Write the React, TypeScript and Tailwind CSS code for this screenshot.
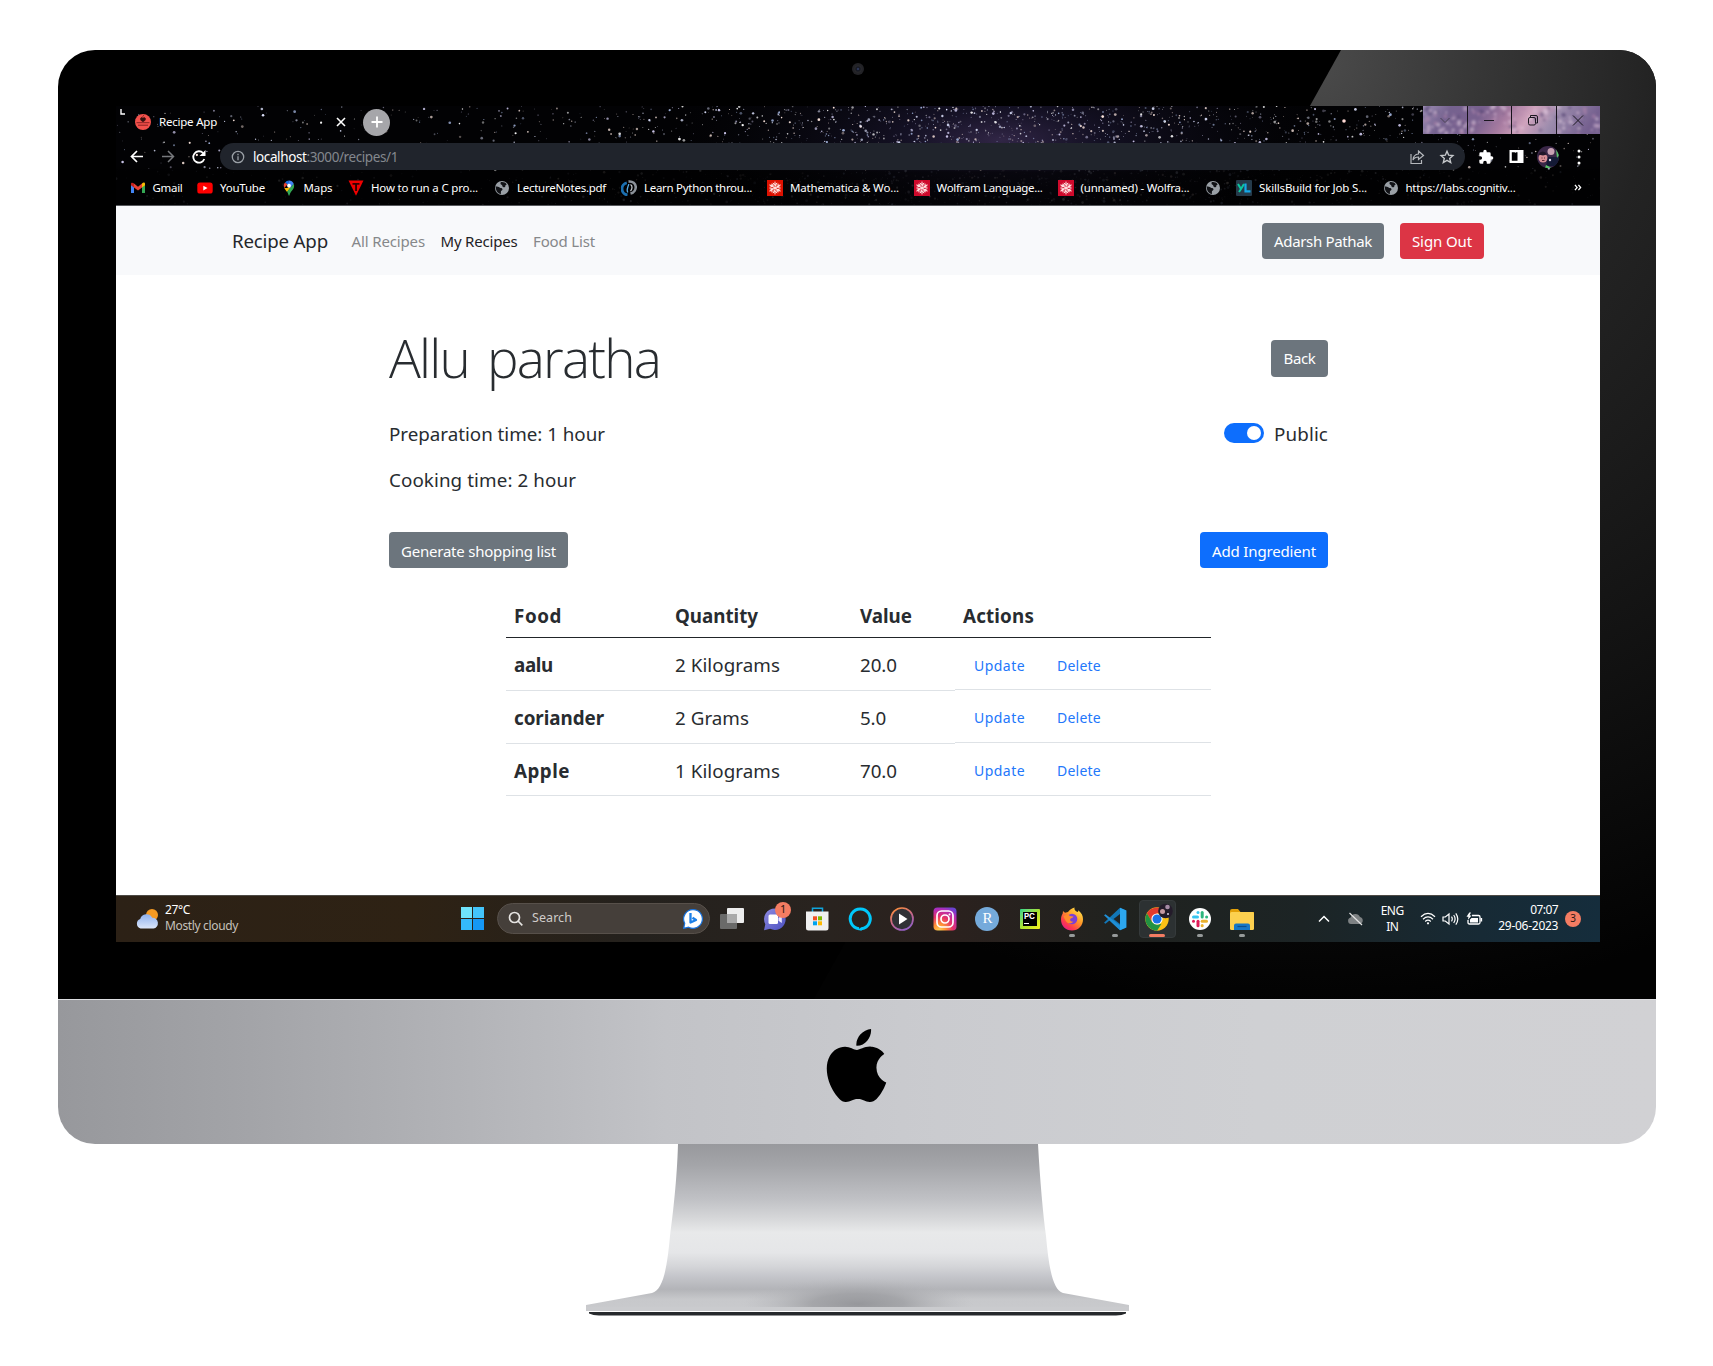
import React, { useLayoutEffect, useRef, useState } from "react";
import { SiApple } from "react-icons/si";

/* Text drawn at an exact width: spacing between letters is adjusted after measuring. */
function Fit({ w, className = "", children }: { w: number; className?: string; children: React.ReactNode }) {
  const ref = useRef<HTMLSpanElement>(null);
  const [spacing, setSpacing] = useState(0);
  useLayoutEffect(() => {
    const el = ref.current;
    if (!el) return;
    const n = (el.textContent || "").length;
    setSpacing((w - el.getBoundingClientRect().width) / n);
  }, [w]);
  return (
    <span ref={ref} className={"inline-block justify-self-start whitespace-nowrap " + className} style={{ letterSpacing: spacing }}>
      {children}
    </span>
  );
}

function makeRandom(seed: number) {
  let s = seed;
  return () => {
    s = (s * 1664525 + 1013904223) % 4294967296;
    return s / 4294967296;
  };
}

type Star = { x: number; y: number; r: number; o: number; c: string };

function makeStars(): Star[] {
  const rnd = makeRandom(77);
  const colors = ["#ffffff", "#dfe4ff", "#c9c4e8", "#ffe9e0", "#9fb0d8"];
  const out: Star[] = [];
  for (let i = 0; i < 7500; i++) {
    const x = rnd() * 1484;
    const y = rnd() * 100;
    const k = Math.exp(-Math.pow((x - 890) / 340, 2));
    const keep = 0.12 + k * 0.75;
    const pick = rnd();
    const size = rnd();
    const shade = rnd();
    const col = colors[Math.floor(rnd() * colors.length)];
    if (pick > keep) continue;
    const low = y > 64;
    out.push({ x, y, r: 0.45 + size * size * size * 0.95, o: (0.3 + shade * 0.7) * (low ? 0.3 : 1), c: col });
  }
  return out;
}
const STARS = makeStars();

function Sky() {
  return (
    <svg className="absolute inset-0" width="1484" height="100" viewBox="0 0 1484 100" aria-hidden="true">
      <defs>
        <radialGradient id="milky" cx="0.5" cy="0.5" r="0.5">
          <stop offset="0" stopColor="#453562" stopOpacity="0.7" />
          <stop offset="0.3" stopColor="#1f1a38" stopOpacity="0.6" />
          <stop offset="1" stopColor="#05060c" stopOpacity="0" />
        </radialGradient>
        <linearGradient id="dim" x1="0" x2="0" y1="0" y2="1">
          <stop offset="0" stopColor="#000" stopOpacity="0" />
          <stop offset="0.6" stopColor="#000" stopOpacity="0" />
          <stop offset="0.66" stopColor="#000" stopOpacity="0.6" />
          <stop offset="1" stopColor="#000" stopOpacity="0.6" />
        </linearGradient>
      </defs>
      <rect width="1484" height="100" fill="#020204" />
      <ellipse cx="885" cy="34" rx="330" ry="110" fill="url(#milky)" />
      {STARS.map((s, i) => (
        <circle key={i} cx={s.x} cy={s.y} r={s.r} fill={s.c} opacity={s.o} />
      ))}
      <circle cx="1228" cy="15" r="1.8" fill="#ffd9d4" />
      <path d="M5 3v5h4" stroke="#fff" strokeWidth="1.4" fill="none" />
      <rect width="1484" height="100" fill="url(#dim)" />
    </svg>
  );
}

const Globe = () => (
  <svg width="16" height="16" viewBox="0 0 16 16">
    <circle cx="8" cy="8" r="7" fill="#9aa0a6" />
    <path d="M1.800 6.500c1.500 0 2.800.1 3.800 1 .9.900 2.800.2 2.900 1.700.1 1.300-1.600 1.200-1.600 2.600v2.300C3.800 13.700 1.500 10.500 1.800 6.500zM6.800 2.200c2.500-.4 4.700.4 6 2.300-1 .2-1.400.8-1.500 1.700 0 1.200-1.400 1.500-2.300.8-.9-.6-.4-1.700-1.400-2.200-.9-.4-1.600-1.700-.8-2.600z" fill="#111216" />
  </svg>
);
const Gmail = () => (
  <svg width="16" height="16" viewBox="0 0 16 16">
    <path d="M1 3.6V13h3V7.2L1 4.4z" fill="#4285f4" />
    <path d="M12 7.2V13h3V4.2z" fill="#34a853" />
    <path d="M12 3.6v4L15 5.3V4c0-1.6-1.7-1.9-3-.4z" fill="#fbbc04" />
    <path d="M4 3.6 8 6.7l4-3.1v4L8 10.6 4 7.6z" fill="#ea4335" />
    <path d="M1 4v1.3l3 2.3v-4C2.700 2.400 1 2.500 1 4z" fill="#c5221f" />
  </svg>
);
const YouTube = () => (
  <svg width="16" height="16" viewBox="0 0 16 16">
    <rect x="0.3" y="2.600" width="15.400" height="11" rx="2.700" fill="#f00" />
    <path d="M6.300 5.700v4.800L10.500 8.100z" fill="#fff" />
  </svg>
);
const MapPin = () => (
  <svg width="16" height="16" viewBox="0 0 16 16">
    <path d="M8 .5a5.300 5.300 0 0 0-4 1.900l3 2.600z" fill="#1a73e8" />
    <path d="M4 2.400A5.300 5.300 0 0 0 3.300 8l3.100-3.500z" fill="#ea4335" />
    <path d="M3.300 8c.7 1.400 1.700 2.400 2.700 3.900l5.900-7.500-2 1.300L6.400 8z" fill="#fbbc04" />
    <path d="M12.700 3.800c1 2.600.3 4.300-1.400 6.400C9.700 12.300 9 13 8.500 15.500H7.600C7.300 13.800 6.800 12.900 6 11.700z" fill="#34a853" />
    <path d="M8 .5c2.100 0 3.900 1.200 4.700 3.300L9.300 7.700 6.800 4z" fill="#4285f4" />
    <circle cx="8" cy="5.700" r="1.900" fill="#fff" />
  </svg>
);
const Triangle = () => (
  <svg width="16" height="16" viewBox="0 0 16 16">
    <path d="M.5.5h15L8 15.700z" fill="#f00000" />
    <path d="M4.500 3h7v1.800H9V11H7.100V4.800H4.500z" fill="#300" />
  </svg>
);
const Python = () => (
  <svg width="16" height="16" viewBox="0 0 16 16" fill="none">
    <path d="M6.500 15A6.200 6.200 0 0 1 5.800 2.800" stroke="#1b6fb0" strokeWidth="2.800" />
    <path d="M6.800 12.500c-2-3 .5-5.500 1-8.500" stroke="#5aa7dc" strokeWidth="1.300" />
    <path d="M7.500 1.600c9-1 9.500 10 2 12" stroke="#8b9199" strokeWidth="2.600" />
    <path d="M9.500 4.500c2.500 1.500 1.500 5 0 6.500" stroke="#c3c7cc" strokeWidth="1.300" />
  </svg>
);
const WolframMark = ({ color }: { color: string }) => (
  <svg width="16" height="16" viewBox="0 0 16 16">
    <rect width="16" height="16" fill={color} />
    <g stroke="#ffe4e2" strokeWidth="1" fill="none">
      {[0, 60, 120, 180, 240, 300].map((a) => (
        <path key={a} d="M8 8V1.600M8 4.700 5.800 3M8 4.700 10.200 3M8 6 L10.300 4.300" transform={`rotate(${a} 8 8)`} />
      ))}
    </g>
  </svg>
);
const SkillsIcon = () => (
  <svg width="16" height="16" viewBox="0 0 16 16">
    <rect width="16" height="16" rx="1" fill="#253a4a" />
    <path d="M2 4l3 5-2 3M8 4 5 9" stroke="#0cc6a0" strokeWidth="2" fill="none" />
    <path d="M9.500 3.500v7.800h5" stroke="#16a9e8" strokeWidth="2.200" fill="none" />
  </svg>
);

const bookmarks: { icon: React.ReactNode; text?: string; tw: number; cell: string }[] = [
  { icon: <Gmail />, text: "Gmail", tw: 30, cell: "w-[67.5px]" },
  { icon: <YouTube />, text: "YouTube", tw: 45, cell: "w-[83.5px]" },
  { icon: <MapPin />, text: "Maps", tw: 29, cell: "w-[67.5px]" },
  { icon: <Triangle />, text: "How to run a C pro...", tw: 107, cell: "w-[146px]" },
  { icon: <Globe />, text: "LectureNotes.pdf", tw: 89, cell: "w-[127px]" },
  { icon: <Python />, text: "Learn Python throu...", tw: 108, cell: "w-[146px]" },
  { icon: <WolframMark color="#dd1100" />, text: "Mathematica & Wo...", tw: 109, cell: "w-[146.5px]" },
  { icon: <WolframMark color="#cf0a2c" />, text: "Wolfram Language...", tw: 106, cell: "w-[144px]" },
  { icon: <WolframMark color="#cf0a2c" />, text: "(unnamed) - Wolfra...", tw: 109, cell: "w-[147.5px]" },
  { icon: <Globe />, tw: 0, cell: "w-[31px]" },
  { icon: <SkillsIcon />, text: "SkillsBuild for Job S...", tw: 108, cell: "w-[146.500px]" },
  { icon: <Globe />, text: "https://labs.cognitiv...", tw: 110, cell: "w-[190px]" },
];

function WindowButtons() {
  const dots = makeRandom(9);
  return (
    <div className="relative ml-auto flex h-[28px] w-[177px] overflow-hidden bg-[#8a74a0]">
      <svg className="absolute inset-0" width="177" height="28" viewBox="0 0 177 28">
        <defs>
          <linearGradient id="neb" x1="0" x2="1" y1="0" y2="0.1">
            <stop offset="0" stopColor="#9d8fb4" />
            <stop offset="0.16" stopColor="#75628f" />
            <stop offset="0.35" stopColor="#79618f" />
            <stop offset="0.5" stopColor="#a67ba0" />
            <stop offset="0.63" stopColor="#d0a3bd" />
            <stop offset="0.78" stopColor="#9c8cad" />
            <stop offset="1" stopColor="#75608f" />
          </linearGradient>
          <filter id="soft"><feGaussianBlur stdDeviation="0.9" /></filter>
        </defs>
        <rect width="177" height="28" fill="url(#neb)" />
        <g filter="url(#soft)">
          {Array.from({ length: 150 }, (_, i) => (
            <circle key={i} cx={dots() * 177} cy={dots() * 28} r={0.8 + dots() * 1.800} fill={["#d9bcd6", "#5c4a78", "#b98ab0", "#e6d3e4"][i % 4]} opacity="0.45" />
          ))}
        </g>
        <path d="M44.500 0v28M88.500 0v28M133.500 0v28" stroke="#17121c" strokeWidth="1" />
        <g fill="none" stroke="#1b1720" strokeWidth="1">
          <path d="M17.500 12l4.500 4.500 4.500-4.500" stroke="#4a4254" />
          <path d="M61 14.500h10" />
          <rect x="105.500" y="11.500" width="7" height="7.500" rx="1.500" />
          <path d="M107.500 11v-1.500h5.500q1.500 0 1.500 1.500v6h-1.500" />
          <path d="M150 9.500l10 10M160 9.500l-10 10" />
        </g>
      </svg>
    </div>
  );
}

function BrowserChrome() {
  return (
    <div className="relative h-[100px] w-full overflow-hidden bg-black text-white">
      <Sky />
      <div className="relative flex h-full flex-col">
        <div className="flex h-[37px] items-start">
          <div className="flex h-[32px] items-center pl-[19px]">
            <svg width="16" height="16" viewBox="0 0 16 16">
              <circle cx="8" cy="8" r="8" fill="#f2504b" />
              <path d="M1.500 8.700h13M3 11.200h10" stroke="#7c1d1c" strokeWidth="0.900" />
              <path d="M8 7.700C5.800 7 5 5.200 5.800 4c.8-.9 1.800-.4 2.200.3.400-.9 1.500-1.200 2.200-.3C11 5.200 10.200 7 8 7.700zM7.500 2.500 9 1.300" fill="#34100f" stroke="#34100f" strokeWidth="0.600" />
            </svg>
            <Fit w={58} className="ml-2 text-[11.5px]">Recipe App</Fit>
            <svg className="ml-[119px]" width="10" height="10" viewBox="0 0 10 10"><path d="M1 1l8 8M9 1L1 9" stroke="#fff" strokeWidth="1.600" /></svg>
            <div className="ml-[17px] flex h-[27px] w-[27px] items-center justify-center rounded-full bg-[#a6a6aa]">
              <svg width="12" height="12" viewBox="0 0 12 12"><path d="M6 .5v11M.5 6h11" stroke="#fff" strokeWidth="1.800" /></svg>
            </div>
          </div>
          <WindowButtons />
        </div>
        <div className="flex h-[27px] items-center pl-[13px]">
          <svg width="16" height="16" viewBox="0 0 16 16" fill="none" stroke="#fff" strokeWidth="1.700"><path d="M14 7.500H3M8 2 2.500 7.500 8 13" /></svg>
          <svg className="ml-[15px]" width="16" height="16" viewBox="0 0 16 16" fill="none" stroke="#77797d" strokeWidth="1.500"><path d="M2 7.500h11M8 2l5.500 5.500L8 13" /></svg>
          <svg className="ml-[15px]" width="16" height="16" viewBox="0 0 16 16" fill="none" stroke="#fff" strokeWidth="1.800"><path d="M13.300 10a5.700 5.700 0 1 1-1.200-6" /><path d="M14.500 1v6H8.500z" fill="#fff" stroke="none" /></svg>
          <div className="ml-[13px] flex h-[27px] w-[1244.500px] items-center rounded-full bg-[#20242c] pl-[11px] pr-[10px]">
            <svg width="14" height="14" viewBox="0 0 14 14" fill="none" stroke="#9aa0a6" strokeWidth="1.300"><circle cx="7" cy="7" r="5.700" /><path d="M7 6.300v3.900M7 3.800v1.400" /></svg>
            <Fit w={145} className="ml-2 pt-px text-[13.500px] text-[#84888e]"><span className="text-white">localhost</span>:3000/recipes/1</Fit>
            <svg className="ml-auto" width="16" height="16" viewBox="0 0 16 16" fill="none" stroke="#b4b7bb" strokeWidth="1.200"><path d="M2 5v9.500h10.500v-3.500M9.500 2 14.500 6.500l-5 4V8C7 8 5 9 4 11c.2-3 2-5.700 5.500-6z" /></svg>
            <svg className="ml-[14px]" width="16" height="16" viewBox="0 0 16 16" fill="none" stroke="#c4c7ca" strokeWidth="1.400"><path d="M8 2.300l1.700 3.900 4.200.4-3.200 2.800 1 4.200L8 11.400l-3.700 2.200 1-4.200L2.100 6.600l4.200-.4z" /></svg>
          </div>
          <svg className="ml-[13px]" width="16" height="16" viewBox="0 0 24 24" fill="#fff"><path d="M20.500 11H19V7a2 2 0 0 0-2-2h-4V3.500a2.500 2.500 0 0 0-5 0V5H4a2 2 0 0 0-2 2v3.800h1.500a2.700 2.700 0 0 1 0 5.400H2V20a2 2 0 0 0 2 2h3.800v-1.500a2.700 2.700 0 0 1 5.400 0V22H17a2 2 0 0 0 2-2v-4h1.500a2.500 2.500 0 0 0 0-5z" /></svg>
          <svg className="ml-[15px]" width="15" height="15" viewBox="0 0 15 15"><path d="M.5 1h14v13H.5zM2.800 3.200v8.600h5.700V3.200z" fill="#fff" fillRule="evenodd" /></svg>
          <svg className="ml-[13px]" width="22" height="22" viewBox="0 0 22 22">
            <clipPath id="av"><circle cx="11" cy="11" r="11" /></clipPath>
            <g clipPath="url(#av)">
              <rect width="22" height="22" fill="#3a2748" />
              <circle cx="6" cy="12" r="4.500" fill="#d78f96" /><circle cx="14" cy="5.500" r="3.500" fill="#c8a2b4" />
              <path d="M1 8.500q5-6 9 0l-4 1z" fill="#201629" /><path d="M11 11h11v9H9z" fill="#141a36" />
              <path d="M19 3l3 6-2 3zM9 19l6 3H8z" fill="#58c56a" /><circle cx="13" cy="14" r="1.200" fill="#d6cde2" />
              <path d="M4.500 12h1M7 12h1M5 14.500h2.500" stroke="#5b2838" />
            </g>
          </svg>
          <svg className="ml-[18px]" width="4" height="16" viewBox="0 0 4 16" fill="#fff"><circle cx="2" cy="2" r="1.500" /><circle cx="2" cy="8" r="1.500" /><circle cx="2" cy="14" r="1.500" /></svg>
        </div>
        <div className="flex h-[35px] items-center pl-[13.500px]">
          {bookmarks.map((b, i) => (
            <div key={i} className={"flex shrink-0 items-center " + b.cell}>
              {b.icon}
              {b.text && <Fit w={b.tw} className="ml-[7px] text-[11.500px]">{b.text}</Fit>}
            </div>
          ))}
          <svg width="10" height="7" viewBox="0 0 11 8" fill="none" stroke="#fff" strokeWidth="1.500"><path d="M2 1l2.500 3L2 7M6 1l2.500 3L6 7" /></svg>
        </div>
        <div className="h-px bg-[#56585c]" />
      </div>
    </div>
  );
}

function SiteNav() {
  return (
    <nav className="flex h-[69px] items-center bg-[#f8f9fb] pl-[116px] pr-[116px] text-[15px] text-[#86888a]">
      <Fit w={96} className="pt-[2px] text-[18.700px] text-[#24272b]">Recipe App</Fit>
      <Fit w={73.5} className="ml-[23.500px] pt-[2px]">All Recipes</Fit>
      <Fit w={77} className="ml-[15.500px] pt-[2px] text-[#1f2226]">My Recipes</Fit>
      <Fit w={62} className="ml-[15.500px] pt-[2px]">Food List</Fit>
      <button className="ml-auto flex h-[36px] w-[122px] items-center justify-center rounded-[4px] bg-[#6c757d] pt-px text-white"><Fit w={98}>Adarsh Pathak</Fit></button>
      <button className="ml-[16px] flex h-[36px] w-[84px] items-center justify-center rounded-[4px] bg-[#dc3545] pt-px text-white"><Fit w={60}>Sign Out</Fit></button>
    </nav>
  );
}

const rows = [
  { food: "aalu", fw: 39, qty: "2 Kilograms", qw: 105, value: "20.0", vw: 37 },
  { food: "coriander", fw: 90, qty: "2 Grams", qw: 74, value: "5.0", vw: 26 },
  { food: "Apple", fw: 56, qty: "1 Kilograms", qw: 105, value: "70.0", vw: 37 },
];

function RecipePage() {
  return (
    <main className="flex h-[620px] shrink-0 flex-col bg-white pl-[273px] pr-[272px] pt-[65px] text-[18.800px] text-[#282c30]">
      <div className="flex h-[37px] items-center justify-between">
        <Fit w={271} className="relative -top-px font-['Open_Sans','Noto_Sans',sans-serif] text-[53px] font-light leading-[37px] [word-spacing:6px]">Allu paratha</Fit>
        <button className="flex h-[37px] w-[57px] items-center justify-center rounded-[4px] bg-[#6c757d] text-[15px] text-white"><Fit w={32}>Back</Fit></button>
      </div>
      <div className="mt-[42px] flex h-[30px] items-center justify-between">
        <Fit w={216}>Preparation time: 1 hour</Fit>
        <div className="flex items-center gap-[10px]">
          <div className="relative -top-px flex h-[20px] w-[40px] items-center justify-end rounded-full bg-[#0d6efd] pr-[3px]"><div className="h-[14px] w-[14px] rounded-full bg-white" /></div>
          <Fit w={54}>Public</Fit>
        </div>
      </div>
      <div className="mt-[16px] flex h-[30px] items-center"><Fit w={187}>Cooking time: 2 hour</Fit></div>
      <div className="mt-[37px] flex h-[36px] items-center justify-between text-[15px] text-white">
        <button className="flex h-[36px] w-[179px] items-center justify-center rounded-[4px] bg-[#6c757d] pt-[2px]"><Fit w={155}>Generate shopping list</Fit></button>
        <button className="flex h-[36px] w-[128px] items-center justify-center rounded-[4px] bg-[#0d6efd] pt-[2px]"><Fit w={104}>Add Ingredient</Fit></button>
      </div>
      <div className="ml-[117px] mt-[26px] w-[705px]">
        <div className="grid h-[44px] grid-cols-[161px_185px_103px_256px] items-center border-b border-[#212529] pl-2 pt-px font-bold">
          <Fit w={48}>Food</Fit><Fit w={83}>Quantity</Fit><Fit w={52}>Value</Fit><Fit w={71}>Actions</Fit>
        </div>
        {rows.map((r) => (
          <div key={r.food} className="flex h-[52.800px]">
            <div className="grid w-[449px] grid-cols-[161px_185px_103px] items-center border-b border-[#dee2e6] pl-2 pt-[3px]">
              <Fit w={r.fw} className="font-bold">{r.food}</Fit>
              <Fit w={r.qw}>{r.qty}</Fit>
              <Fit w={r.vw}>{r.value}</Fit>
            </div>
            <div className="flex h-[52px] w-[256px] items-center border-b border-[#dee2e6] pl-[19px] pt-[3px] text-[14px] text-[#2377fb]">
              <Fit w={51}>Update</Fit>
              <Fit w={44} className="ml-[32px]">Delete</Fit>
            </div>
          </div>
        ))}
      </div>
    </main>
  );
}

const S = ({ children }: { children: React.ReactNode }) => (
  <svg width="24" height="24" viewBox="0 0 24 24">{children}</svg>
);

const apps: { icon: React.ReactNode; open?: boolean; active?: boolean; badge?: string }[] = [
  {
    icon: (
      <S>
        <rect x="7" y="1" width="17" height="15" rx="1" fill="#ededed" />
        <rect x="0" y="7" width="17" height="15" rx="1" fill="#777" fillOpacity="0.850" />
        <path d="M7 7h10v9H7z" fill="#a9a9a9" />
      </S>
    ),
  },
  {
    badge: "1",
    icon: (
      <S>
        <defs><linearGradient id="chat" x1="0" x2="1" y1="0" y2="1"><stop offset="0" stopColor="#8f8ae0" /><stop offset="1" stopColor="#4a50c0" /></linearGradient></defs>
        <path d="M12 1.500a10.700 10.700 0 1 1-4.800 20.300L1 23.200l1.300-6A10.700 10.700 0 0 1 12 1.500z" fill="url(#chat)" />
        <rect x="5.500" y="7.500" width="9.500" height="9.500" rx="1.500" fill="#fff" /><path d="M15.500 11l3.300-2.300v7.200L15.500 13.700z" fill="#e9e6ff" />
      </S>
    ),
  },
  {
    icon: (
      <S>
        <path d="M7.500 5V1.200h10V5" stroke="#0fa5dd" strokeWidth="1.500" fill="none" />
        <path d="M1 4.500h22.500v16.500a2.500 2.500 0 0 1-2.500 2.500H3.500A2.500 2.500 0 0 1 1 21z" fill="#f0f0f0" />
        <path d="M8 9.300h4v4H8z" fill="#f25022" /><path d="M13 9.300h4v4h-4z" fill="#7fba00" /><path d="M8 14.300h4v4H8z" fill="#00a4ef" /><path d="M13 14.300h4v4h-4z" fill="#ffb900" />
      </S>
    ),
  },
  { icon: <S><path d="M11 21.800A10 10 0 1 1 13.500 21.800Q12 22.500 11.800 23.400" stroke="#00c8fb" strokeWidth="3" fill="none" /></S> },
  {
    icon: (
      <S>
        <defs><linearGradient id="mp" x1="0.200" x2="0.700" y1="0" y2="1"><stop offset="0" stopColor="#ff8f3d" /><stop offset="0.550" stopColor="#c0648f" /><stop offset="1" stopColor="#9260c8" /></linearGradient></defs>
        <circle cx="12" cy="12" r="11" fill="#303136" stroke="url(#mp)" strokeWidth="1.700" /><path d="M9 6.500l8.500 5.500L9 17.500z" fill="#fff" />
      </S>
    ),
  },
  {
    icon: (
      <S>
        <defs>
          <radialGradient id="ig" cx="0.250" cy="1" r="1.100"><stop offset="0" stopColor="#ffd255" /><stop offset="0.250" stopColor="#ff9336" /><stop offset="0.550" stopColor="#e5306b" /><stop offset="0.850" stopColor="#b02cba" /><stop offset="1" stopColor="#6a43d0" /></radialGradient>
        </defs>
        <rect x="0.500" y="0.500" width="23" height="23" rx="4" fill="url(#ig)" />
        <g fill="none" stroke="#fff" strokeWidth="1.700"><rect x="4" y="4" width="16" height="16" rx="4.500" /><circle cx="12" cy="12" r="4" /></g><circle cx="16.500" cy="7.500" r="1" fill="#fff" />
      </S>
    ),
  },
  {
    icon: (
      <div className="flex h-6 w-6 items-center justify-center rounded-full bg-[#75aadb] font-['Liberation_Serif',serif] text-[15px] leading-none text-white">R</div>
    ),
  },
  {
    icon: (
      <div className="flex h-[20px] w-[20px] rounded-[1px] bg-gradient-to-br from-[#21d789] via-[#a6e22e] to-[#f5f01d] p-[3px]">
        <div className="flex h-[14px] w-[14px] flex-col bg-black pl-px pt-px font-[Inter,sans-serif] text-[8px] font-bold leading-[7px] text-white">
          PC
          <div className="mt-[3px] h-px w-[5px] bg-white" />
        </div>
      </div>
    ),
  },
  {
    open: true,
    icon: (
      <S>
        <defs><linearGradient id="ff" x1="0.900" x2="0.200" y1="0.100" y2="1"><stop offset="0" stopColor="#ffe14a" /><stop offset="0.400" stopColor="#ff9a28" /><stop offset="0.750" stopColor="#ff3d4a" /><stop offset="1" stopColor="#e8188a" /></linearGradient></defs>
        <path d="M14.500.5c-.6 2 1 3.500 3 4.500.8-.3.900-1 .8-1.700 3.500 3 4.700 5.600 4.700 9C23 19 18.300 23.500 12 23.500S1 19 1 12.500c0-3 .8-4.500 1.700-6L3 4l2 1.700 3-.6c1.500-2.200 3.800-4 6.500-4.600z" fill="url(#ff)" />
        <circle cx="12" cy="12" r="5.300" fill="#7b3fd6" />
        <path d="M3.500 9.500c2.500-2.500 5-2 6.500-.5 1.500.3 3 .3 3.500.8-.6 1.200-2.700 1.500-3.400 2.500-.2 1.800 1.500 2.700 3.300 2.200-1.500 2.500-6 2.700-7.900-1z" fill="#ff8b2c" />
      </S>
    ),
  },
  {
    open: true,
    icon: (
      <S>
        <path d="M17 .8 23.300 3.500v17L17 23.200 6.500 13.500 2.500 16.700 1 15.800 13.500 4z" fill="#1277b8" />
        <path d="M17 .8 23.300 3.500v17L17 23.200z" fill="#2ca7f0" /><path d="M1 8.200l1.500-.9L17 18.500v4.700z" fill="#1f8fd6" /><path d="M17 7v10l-6.500-5z" fill="#1f2426" />
      </S>
    ),
  },
  {
    active: true,
    icon: (
      <S>
        <circle cx="12" cy="12" r="11.700" fill="#fbc116" />
        <path d="M12 12 1.900 6.200A11.700 11.700 0 0 1 22.100 6.200H12z" fill="#e33b2e" />
        <path d="M1.900 6.200 7 15l5-3-3-6z" fill="#e33b2e" /><path d="M1.900 6.200 7 15l5 2.800 4.500-1L12 23.700A11.700 11.700 0 0 1 1.900 6.200z" fill="#229342" />
        <circle cx="12" cy="12" r="5.600" fill="#fff" /><circle cx="12" cy="12" r="4.500" fill="#1a73e8" />
      </S>
    ),
  },
  {
    open: true,
    icon: (
      <S>
        <circle cx="12" cy="12" r="11" fill="#fff" />
        <g strokeWidth="3" strokeLinecap="round"><path d="M5.500 10h4" stroke="#36c5f0" /><path d="M10 5.500v.1" stroke="#36c5f0" /><path d="M14.200 5.500V10" stroke="#2eb67d" /><path d="M18.600 10v.1" stroke="#2eb67d" /><path d="M14.200 14.200h4.300" stroke="#ecb22e" /><path d="M14.200 18.600v.1" stroke="#ecb22e" /><path d="M10 14.200v4.500" stroke="#e01e5a" /><path d="M5.500 14.200v.1" stroke="#e01e5a" /></g>
      </S>
    ),
  },
  {
    open: true,
    icon: (
      <S>
        <path d="M0 4a2 2 0 0 1 2-2h6l2.500 3H24v6H0z" fill="#e3a008" />
        <rect x="0" y="5" width="24" height="18" rx="1.500" fill="#fcd04f" /><path d="M4 23v-4.500a2 2 0 0 1 2-2h12a2 2 0 0 1 2 2V23z" fill="#1577c6" /><path d="M7.500 19.500h9" stroke="#0b4f8d" strokeWidth="1.200" />
      </S>
    ),
  },
];

function Taskbar() {
  return (
    <div className="flex h-[47px] shrink-0 items-center border-t border-[#4d4a45] bg-[linear-gradient(90deg,#2c2116_0%,#2e2214_20%,#24211d_35%,#29231f_48%,#2b211e_56%,#20221f_68%,#1c2425_80%,#172a35_92%,#152d3c_100%)] pb-px text-[12px] text-white">
      <svg className="ml-[18.500px]" width="24" height="22" viewBox="0 0 24 22">
        <defs><linearGradient id="cl" x1="0" x2="0" y1="0" y2="1"><stop offset="0" stopColor="#8fb1ee" /><stop offset="1" stopColor="#dbe6fb" /></linearGradient></defs>
        <circle cx="17" cy="7" r="6" fill="#f59a23" />
        <path d="M5.500 20.500a5 5 0 0 1-.3-9.500 6.500 6.500 0 0 1 12-1.200 5.400 5.400 0 0 1 1.300 10.700z" fill="url(#cl)" />
      </svg>
      <div className="ml-[6.500px] flex w-[295.500px] flex-col pb-px leading-[16px]">
        <Fit w={25} className="self-start">27°C</Fit>
        <Fit w={73} className="self-start text-[#c6c1bb]">Mostly cloudy</Fit>
      </div>
      <div className="grid h-[23px] w-[23px] grid-cols-2 gap-px"><i className="bg-[#6fe3fb]" /><i className="bg-[#43c5fb]" /><i className="bg-[#34b9fb]" /><i className="bg-[#1598f5]" /></div>
      <div className="ml-[13.500px] flex h-[31px] w-[212.500px] items-center rounded-full border border-[#57504a] bg-[#453f3a] pl-[10px] pr-[6px]">
        <svg width="15" height="15" viewBox="0 0 15 15" fill="none" stroke="#e6e4e2" strokeWidth="1.700"><circle cx="6.500" cy="6.500" r="5" /><path d="M10 10l4.300 4.300" /></svg>
        <Fit w={40} className="ml-[9px] text-[12.500px] text-[#cfccc9]">Search</Fit>
        <svg className="ml-auto" width="20" height="20" viewBox="0 0 20 20">
          <path d="M10 .7a9.300 9.300 0 1 1-4.300 17.500L.7 19.300l1-5A9.300 9.300 0 0 1 10 .7z" fill="#fff" stroke="#1a75e0" strokeWidth="1.200" />
          <path d="M7.500 4v9.500l5.500-2.500-3.500-2.300" fill="none" stroke="#1b7fe8" strokeWidth="2.300" strokeLinejoin="round" />
        </svg>
      </div>
      <div className="ml-[1.700px] flex">
        {apps.map((a, i) => (
          <div key={i} className="relative flex h-[46px] w-[42.500px] items-center justify-center">
            {a.active && <div className="absolute left-[3px] top-[4px] h-[38px] w-[37px] rounded-[4px] border border-[#353a3b] bg-[#2c3132]" />}
            <div className="relative">{a.icon}</div>
            {a.badge && <div className="absolute left-[21.500px] top-[6px] flex h-4 w-4 items-center justify-center rounded-full bg-[#f47c62] text-[11px] text-[#2a1512]">{a.badge}</div>}
            {a.active && (
              <svg className="absolute left-[22px] top-[7px]" width="15" height="16" viewBox="0 0 15 16"><circle cx="7.500" cy="8" r="7.300" fill="#241c2b" /><circle cx="4.500" cy="8.500" r="2.500" fill="#c79aa2" /><circle cx="9.500" cy="4" r="2.300" fill="#a58ba6" /><circle cx="10" cy="11" r="1" fill="#d6cde2" /></svg>
            )}
            {a.open && <div className="absolute bottom-[5px] h-[3px] w-[6px] rounded-full bg-[#969a9a]" />}
            {a.active && <div className="absolute bottom-[5px] h-[3px] w-[16px] rounded-full bg-[#f47c62]" />}
          </div>
        ))}
      </div>
      <svg className="ml-[54.500px]" width="12" height="8" viewBox="0 0 12 8" fill="none" stroke="#fff" strokeWidth="1.500"><path d="M1 6.500l5-5 5 5" /></svg>
      <svg className="ml-[16.500px]" width="17" height="14" viewBox="0 0 17 14"><path d="M4 12a3.300 3.300 0 0 1-.3-6.500A5 5 0 0 1 13 5a3.600 3.600 0 0 1 0 7z" fill="#7d8183" /><path d="M2.500 1l12.500 12" stroke="#e2e2e2" strokeWidth="1.200" /></svg>
      <div className="ml-[17px] flex w-[23px] flex-col items-center leading-[15.500px]"><Fit w={23}>ENG</Fit><Fit w={12}>IN</Fit></div>
      <svg className="ml-[16.500px]" width="16" height="13" viewBox="0 0 16 13" fill="none" stroke="#fff" strokeWidth="1.200"><path d="M1 4.700q7-6.500 14 0M3 7.200q5-4.600 10 0M5.200 9.500q2.800-2.600 5.600 0" /><circle cx="8" cy="11.300" r="1.100" fill="#fff" stroke="none" /></svg>
      <svg className="ml-[6px]" width="17" height="14" viewBox="0 0 17 14" fill="none" stroke="#fff" strokeWidth="1.200"><path d="M1 5v4h2.300L7 12V2L3.300 5zM9.500 4.700q1.600 2.300 0 4.600M11.700 3q2.800 4 0 8M13.800 1.300q4 5.700 0 11.400" /></svg>
      <svg className="ml-[7px]" width="17" height="14" viewBox="0 0 17 14"><path d="M6 3.500h6.500q1.500 0 1.500 1.500v5.500q0 1.500-1.500 1.500h-9Q2 12 2 10.500V8M15.500 6v3.500" fill="none" stroke="#fff" strokeWidth="1.300" /><path d="M4 7.500 5.500 6H12v4.500H4zM3.300.5.5 4.800h2L1.800 8 5.500 3.500h-2L5 .5z" fill="#fff" /></svg>
      <div className="ml-[15px] flex w-[60px] flex-col items-end pb-px leading-[16px]"><Fit w={28}>07:07</Fit><Fit w={60}>29-06-2023</Fit></div>
      <div className="ml-[7px] flex h-4 w-4 items-center justify-center rounded-full bg-[#f47c62] text-[10px] text-[#2a1512]">3</div>
    </div>
  );
}

function Glare() {
  return (
    <svg className="absolute inset-0" width="1598" height="949" viewBox="0 0 1598 949" aria-hidden="true">
      <defs>
        <radialGradient id="glare" gradientUnits="userSpaceOnUse" cx="1255" cy="10" r="950">
          <stop offset="0" stopColor="#4b4b4b" /><stop offset="0.180" stopColor="#363636" /><stop offset="0.360" stopColor="#232323" /><stop offset="0.700" stopColor="#121212" /><stop offset="1" stopColor="#020202" />
        </radialGradient>
        <radialGradient id="cam"><stop offset="0" stopColor="#3b4a7a" /><stop offset="0.500" stopColor="#14161f" /><stop offset="1" stopColor="#2b2b2e" /></radialGradient>
      </defs>
      <path d="M1283 0H1598V949H756z" fill="url(#glare)" />
      <circle cx="800" cy="19" r="6" fill="#222226" /><circle cx="800" cy="19" r="3.500" fill="url(#cam)" />
    </svg>
  );
}

function Stand() {
  return (
    <svg className="ml-[527.500px] block" width="546" height="172" viewBox="0 0 546 172" aria-hidden="true">
      <defs>
        <linearGradient id="neck" x1="0" x2="0" y1="0" y2="1">
          <stop offset="0" stopColor="#98999d" /><stop offset="0.120" stopColor="#a3a4a8" /><stop offset="0.330" stopColor="#c0c1c5" /><stop offset="0.440" stopColor="#d5d6d8" /><stop offset="0.530" stopColor="#e8e9ea" /><stop offset="0.650" stopColor="#e5e6e8" /><stop offset="0.730" stopColor="#d5d6d9" /><stop offset="0.800" stopColor="#c3c4c9" /><stop offset="0.870" stopColor="#b3b4b8" /><stop offset="0.930" stopColor="#c7c8cb" /><stop offset="1" stopColor="#c9cacd" />
        </linearGradient>
        <radialGradient id="foot" gradientUnits="userSpaceOnUse" cx="0" cy="0" r="1" gradientTransform="translate(272 160) scale(115 26)">
          <stop offset="0" stopColor="#96979b" /><stop offset="0.400" stopColor="#9c9da1" stopOpacity="0.800" /><stop offset="1" stopColor="#b7b8bc" stopOpacity="0" />
        </radialGradient>
      </defs>
      <path d="M92 0H452C454 36 457 70 460 92C463 125 467 146 477 149L543 161V167H0V161L66 149C77 146 81 125 84 92C87 70 91 36 92 0z" fill="url(#neck)" />
      <rect x="150" y="134" width="244" height="29" fill="url(#foot)" />
      <path d="M0 163H543V167H0z" fill="#cacbce" />
      <path d="M3 168H540V169.500Q536 171.500 530 171.500H13Q7 171.500 3 169.500z" fill="#26292c" />
    </svg>
  );
}

export default function App() {
  return (
    <div className="h-[1366px] w-[1713px] overflow-hidden bg-white pl-[58px] pt-[50px] font-['Noto_Sans','Open_Sans',sans-serif]">
      <div className="w-[1598px] overflow-hidden rounded-[37px]">
        <div className="relative h-[949px] bg-black pl-[58px] pt-[56px]">
          <Glare />
          <div className="relative flex h-[836px] w-[1484px] flex-col overflow-hidden">
            <BrowserChrome />
            <SiteNav />
            <RecipePage />
            <Taskbar />
          </div>
        </div>
        <div className="flex h-[145px] justify-center border-t border-[#dcdde0] bg-[linear-gradient(90deg,#97989c_0%,#a3a4a8_12%,#b2b3b7_25%,#c2c3c7_38%,#cacbcf_55%,#cfd0d3_75%,#d1d1d4_100%)] pt-[29px]">
          <SiApple className="relative -left-px h-[73px] w-[73px] text-black" />
        </div>
      </div>
      <Stand />
    </div>
  );
}
